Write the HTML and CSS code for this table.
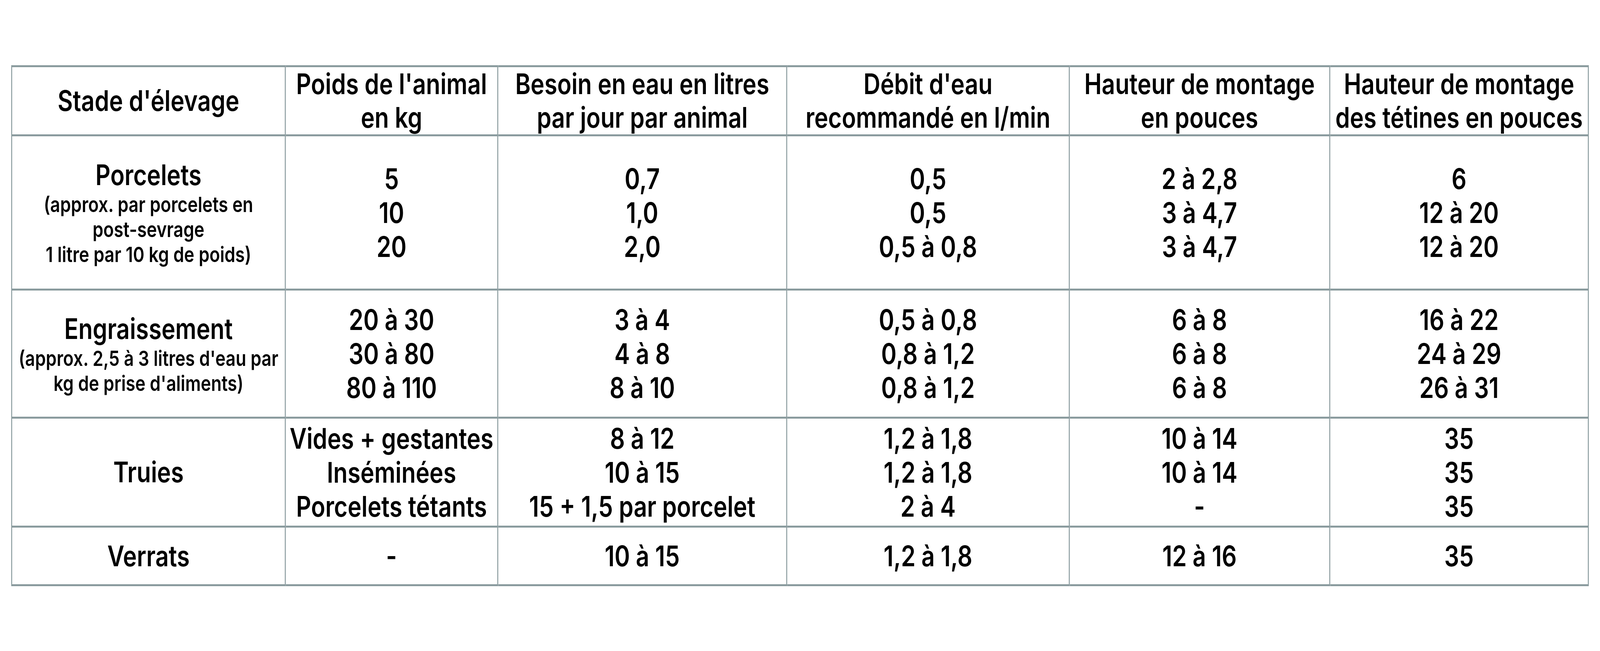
FILE: index.html
```html
<!DOCTYPE html>
<html lang="fr">
<head>
<meta charset="utf-8">
<title>Besoins en eau des porcs</title>
<link rel="stylesheet" href="styles.css">
</head>
<body>
<div class="frame">
<main class="page" id="page">
<table class="water">
  <colgroup>
    <col class="c1"><col class="c2"><col class="c3"><col class="c4"><col class="c5"><col class="c6">
  </colgroup>
  <thead>
    <tr class="r-head">
      <th>Stade d'élevage</th>
      <th>Poids de l'animal<br>en kg</th>
      <th>Besoin en eau en litres<br>par jour par animal</th>
      <th>Débit d'eau<br>recommandé en l/min</th>
      <th>Hauteur de montage<br>en pouces</th>
      <th>Hauteur de montage<br>des tétines en pouces</th>
    </tr>
  </thead>
  <tbody>
    <tr class="r1">
      <td class="stage"><div class="label">Porcelets</div><div class="note">(approx. par porcelets en<br>post-sevrage<br>1 litre par 10 kg de poids)</div></td>
      <td>5<br>10<br>20</td>
      <td>0,7<br>1,0<br>2,0</td>
      <td>0,5<br>0,5<br>0,5 à 0,8</td>
      <td>2 à 2,8<br>3 à 4,7<br>3 à 4,7</td>
      <td>6<br>12 à 20<br>12 à 20</td>
    </tr>
    <tr class="r2">
      <td class="stage"><div class="label">Engraissement</div><div class="note">(approx. 2,5 à 3 litres d'eau par<br>kg de prise d'aliments)</div></td>
      <td>20 à 30<br>30 à 80<br>80 à 110</td>
      <td>3 à 4<br>4 à 8<br>8 à 10</td>
      <td>0,5 à 0,8<br>0,8 à 1,2<br>0,8 à 1,2</td>
      <td>6 à 8<br>6 à 8<br>6 à 8</td>
      <td>16 à 22<br>24 à 29<br>26 à 31</td>
    </tr>
    <tr class="r3">
      <td class="stage"><div class="label">Truies</div></td>
      <td>Vides + gestantes<br>Inséminées<br>Porcelets tétants</td>
      <td>8 à 12<br>10 à 15<br>15 + 1,5 par porcelet</td>
      <td>1,2 à 1,8<br>1,2 à 1,8<br>2 à 4</td>
      <td>10 à 14<br>10 à 14<br>-</td>
      <td>35<br>35<br>35</td>
    </tr>
    <tr class="r4">
      <td class="stage"><div class="label">Verrats</div></td>
      <td>-</td>
      <td>10 à 15</td>
      <td>1,2 à 1,8</td>
      <td>12 à 16</td>
      <td>35</td>
    </tr>
  </tbody>
</table>
</main>
</div>
<script src="script.js"></script>
</body>
</html>
```
FILE: styles.css
```css
html, body {
  margin: 0;
  padding: 0;
  background: #ffffff;
  overflow: hidden;
}
.frame {
  width: 100vw;
  height: 100vh;
  overflow: hidden;
}
.page {
  width: 5000px;
  box-sizing: border-box;
  padding: 167px 0 0 35px;
  transform-origin: 0 0;
  transform: scaleX(var(--fit-x, 1));
}
.water {
  border-collapse: collapse;
  table-layout: fixed;
  width: 4927px;
  font-family: "Inter", "Lato", "Liberation Sans", sans-serif;
  font-weight: 600;
  color: #000000;
  text-align: center;
}
.c1 { width: 855px; }
.c2 { width: 664px; }
.c3 { width: 903px; }
.c4 { width: 883px; }
.c5 { width: 814px; }
.c6 { width: 808px; }

.water th,
.water td {
  padding: 0 4px;
  vertical-align: middle;
  border-left: 3px solid #8a9b9e;
  border-right: 3px solid #8a9b9e;
  border-top: 5px solid #8a9b9e;
  border-bottom: 5px solid #8a9b9e;
  font-size: 73px;
  line-height: 87px;
  white-space: nowrap;
}
.water th {
  font-weight: 600;
  line-height: 86px;
  padding: 0 4px;
}
.r-head { height: 166px; }
.r1 { height: 395px; }
.r2 { height: 328px; }
.r3 { height: 279px; }
.r4 { height: 150px; }

.stage .label {
  font-size: 73px;
  line-height: 88px;
}
.stage .note {
  font-size: 54px;
  line-height: 64px;
}
```
FILE: script.js
```js
(function () {
  // The layout is drawn on a 5000px-wide canvas; fit it to the actual viewport width.
  var fit = Math.min(1, window.innerWidth / 5000);
  document.documentElement.style.setProperty('--fit-x', String(fit));
})();
```
